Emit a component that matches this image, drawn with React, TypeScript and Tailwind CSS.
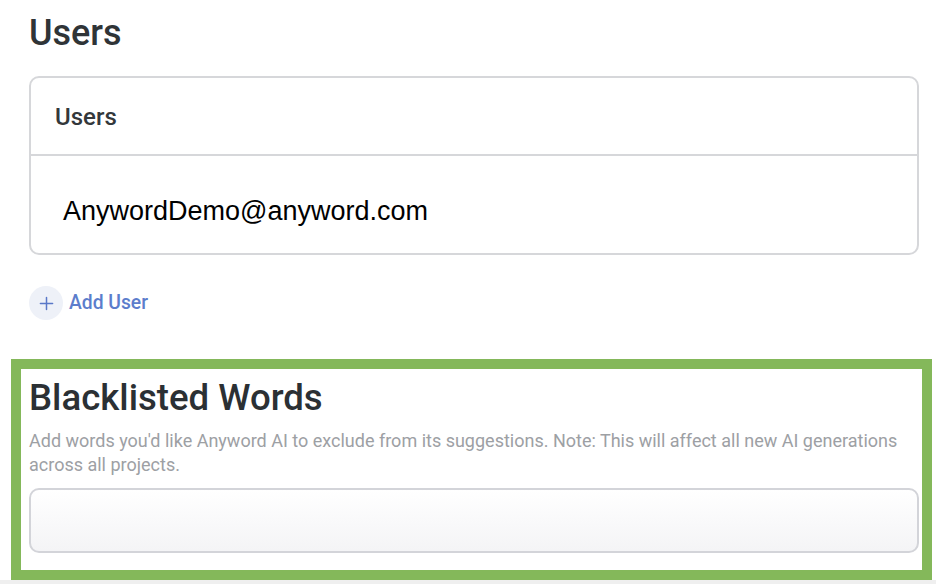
import React from 'react';

const App: React.FC = () => {
  return (
    <div className="w-[936px] h-[584px] bg-white overflow-hidden font-['Roboto',sans-serif] flex flex-col">
      <section className="px-[29px] pr-[17px] pt-[12px]">
        <h1 className="text-[36px] leading-[43px] font-medium text-[#2f3437]">Users</h1>

        <div className="mt-[21px] rounded-[10px] border-2 border-[#d6d7da] bg-white">
          <div className="h-[78px] flex items-center px-[24px] pt-[2px] border-b-2 border-[#d6d7da]">
            <span className="text-[24px] font-medium text-[#33383b]">Users</span>
          </div>
          <div className="h-[97px] flex items-center px-[32px] pt-[12px]">
            <span className="font-['Liberation_Sans',Arial,sans-serif] text-[27px] leading-[30px] text-black">AnywordDemo@anyword.com</span>
          </div>
        </div>

        <button className="mt-[31px] flex items-center gap-[6px]">
          <span className="w-[34px] h-[34px] rounded-full bg-[#eef1f8] flex items-center justify-center">
            <svg width="15" height="15" viewBox="0 0 16 16" fill="none" stroke="#5a78c8" strokeWidth="1.6" strokeLinecap="round">
              <path d="M8 1.5v13M1.5 8h13" />
            </svg>
          </span>
          <span className="text-[19.3px] font-medium text-[#5c7dcc]">Add User</span>
        </button>
      </section>

      <section className="mt-[39px] ml-[11px] w-[921px] h-[221px] border-[10px] border-[#84b85a] bg-white px-[8px]">
        <h2 className="mt-[8px] text-[36.6px] leading-[42px] font-medium text-[#2b3034]">Blacklisted Words</h2>
        <p className="mt-[10px] text-[18px] leading-[24px] text-[#9da0a4] pr-[10px]">
          Add words you'd like Anyword AI to exclude from its suggestions. Note: This will affect all new AI generations across all projects.
        </p>
        <div className="mt-[11px] h-[65px] w-[890px] rounded-[10px] border-2 border-[#d3d4d9] bg-gradient-to-b from-white to-[#f4f4f6]" />
      </section>
      <div className="flex-1 bg-[#efefef]" />
    </div>
  );
};

export default App;
